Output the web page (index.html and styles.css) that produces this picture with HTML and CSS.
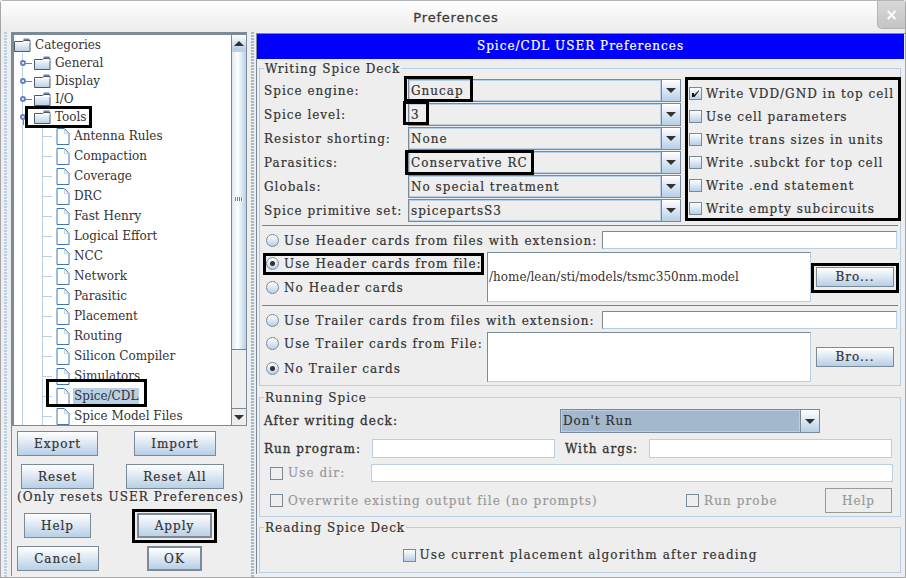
FILE: index.html
```html
<!DOCTYPE html>
<html lang="en">
<head>
<meta charset="utf-8">
<title>Preferences</title>
<link rel="stylesheet" href="styles.css">
</head>
<body>
<svg class="defs" width="0" height="0">
  <defs>
    <linearGradient id="fg" x1="0" y1="0" x2="0" y2="1"><stop offset="0" stop-color="#fff"/><stop offset="1" stop-color="#b8cfe5"/></linearGradient>
    <symbol id="folder" viewBox="0 0 17 14">
      <path d="M9.5 0.5h6v2h-6z" fill="#6382bf"/>
      <path d="M0.5 3.5h8l1.5-1h6v11h-15.500z" fill="url(#fg)" stroke="#4a5a6a"/>
      <path d="M1 4.500h15" stroke="#fff"/>
    </symbol>
    <symbol id="file" viewBox="0 0 14 17">
      <path d="M1 0.500h7.500l4.500 5v11h-12z" fill="#fff" stroke="#3f78b0" stroke-width="1"/>
      <path d="M8.500 0.500v5h4.500" fill="none" stroke="#b8cfe5"/>
    </symbol>
    <symbol id="arrow" viewBox="0 0 10 5"><path d="M0 0h10l-5 5z" fill="#333"/></symbol>
    <symbol id="uparrow" viewBox="0 0 10 5"><path d="M0 5h10l-5-5z" fill="#333"/></symbol>
    <symbol id="check" viewBox="0 0 9 9"><path d="M1 4h2v2l5-5v1l-4.500 6h-2.500z" fill="#111"/></symbol>
  </defs>
</svg>
<div class="window">
  <header class="titlebar">
    <span class="title">Preferences</span>
    <span class="close">×</span>
  </header>
  <main class="main">
    <aside class="left">
      <div class="tree-frame">
        <div class="tree">
          <div class="vline"></div>
          <div class="vline2"></div>
          <div class="tn root"><svg class="ic-folder"><use href="#folder"/></svg><span>Categories</span></div>
          <div class="tn cat"><i class="knob"></i><svg class="ic-folder"><use href="#folder"/></svg><span>General</span></div>
          <div class="tn cat"><i class="knob"></i><svg class="ic-folder"><use href="#folder"/></svg><span>Display</span></div>
          <div class="tn cat"><i class="knob"></i><svg class="ic-folder"><use href="#folder"/></svg><span>I/O</span></div>
          <div class="tn cat"><i class="knob open"></i><svg class="ic-folder"><use href="#folder"/></svg><span>Tools</span></div>
          <div class="tn leaf"><i class="tick"></i><svg class="ic-file"><use href="#file"/></svg><span>Antenna Rules</span></div>
          <div class="tn leaf"><i class="tick"></i><svg class="ic-file"><use href="#file"/></svg><span>Compaction</span></div>
          <div class="tn leaf"><i class="tick"></i><svg class="ic-file"><use href="#file"/></svg><span>Coverage</span></div>
          <div class="tn leaf"><i class="tick"></i><svg class="ic-file"><use href="#file"/></svg><span>DRC</span></div>
          <div class="tn leaf"><i class="tick"></i><svg class="ic-file"><use href="#file"/></svg><span>Fast Henry</span></div>
          <div class="tn leaf"><i class="tick"></i><svg class="ic-file"><use href="#file"/></svg><span>Logical Effort</span></div>
          <div class="tn leaf"><i class="tick"></i><svg class="ic-file"><use href="#file"/></svg><span>NCC</span></div>
          <div class="tn leaf"><i class="tick"></i><svg class="ic-file"><use href="#file"/></svg><span>Network</span></div>
          <div class="tn leaf"><i class="tick"></i><svg class="ic-file"><use href="#file"/></svg><span>Parasitic</span></div>
          <div class="tn leaf"><i class="tick"></i><svg class="ic-file"><use href="#file"/></svg><span>Placement</span></div>
          <div class="tn leaf"><i class="tick"></i><svg class="ic-file"><use href="#file"/></svg><span>Routing</span></div>
          <div class="tn leaf"><i class="tick"></i><svg class="ic-file"><use href="#file"/></svg><span>Silicon Compiler</span></div>
          <div class="tn leaf"><i class="tick"></i><svg class="ic-file"><use href="#file"/></svg><span>Simulators</span></div>
          <div class="tn leaf"><i class="tick"></i><svg class="ic-file"><use href="#file"/></svg><span class="sel">Spice/CDL</span></div>
          <div class="tn leaf"><i class="tick"></i><svg class="ic-file"><use href="#file"/></svg><span>Spice Model Files</span></div>
        </div>
        <div class="scrollbar">
          <div class="sb-btn up"><svg class="sb-arrow"><use href="#uparrow"/></svg></div>
          <div class="sb-thumb"><i class="grip"></i></div>
          <div class="sb-track"></div>
          <div class="sb-btn down"><svg class="sb-arrow"><use href="#arrow"/></svg></div>
        </div>
      </div>
      <div class="btn-area">
        <div class="brow r1"><button class="btn b-export">Export</button><button class="btn b-import">Import</button></div>
        <div class="brow r2"><button class="btn b-reset">Reset</button><button class="btn b-resetall">Reset All</button></div>
        <div class="note">(Only resets USER Preferences)</div>
        <div class="brow r3"><button class="btn b-help">Help</button><button class="btn b-apply">Apply</button></div>
        <div class="brow r4"><button class="btn b-cancel">Cancel</button><button class="btn b-ok">OK</button></div>
      </div>
    </aside>
    <section class="right">
      <h1 class="banner">Spice/CDL USER Preferences</h1>
      <div class="body">
        <fieldset class="group g-write">
          <legend>Writing Spice Deck</legend>
          <div class="deck">
            <div class="combos">
              <div class="frow"><label>Spice engine:</label><div class="combo"><span>Gnucap</span><b><svg class="arr"><use href="#arrow"/></svg></b></div></div>
              <div class="frow"><label>Spice level:</label><div class="combo"><span>3</span><b><svg class="arr"><use href="#arrow"/></svg></b></div></div>
              <div class="frow"><label>Resistor shorting:</label><div class="combo"><span>None</span><b><svg class="arr"><use href="#arrow"/></svg></b></div></div>
              <div class="frow"><label>Parasitics:</label><div class="combo"><span>Conservative RC</span><b><svg class="arr"><use href="#arrow"/></svg></b></div></div>
              <div class="frow"><label>Globals:</label><div class="combo"><span>No special treatment</span><b><svg class="arr"><use href="#arrow"/></svg></b></div></div>
              <div class="frow"><label>Spice primitive set:</label><div class="combo"><span>spicepartsS3</span><b><svg class="arr"><use href="#arrow"/></svg></b></div></div>
            </div>
            <div class="checks">
              <div class="chk"><i class="box"><svg class="tick-mark"><use href="#check"/></svg></i><span>Write VDD/GND in top cell</span></div>
              <div class="chk"><i class="box"></i><span>Use cell parameters</span></div>
              <div class="chk"><i class="box"></i><span>Write trans sizes in units</span></div>
              <div class="chk"><i class="box"></i><span>Write .subckt for top cell</span></div>
              <div class="chk"><i class="box"></i><span>Write .end statement</span></div>
              <div class="chk"><i class="box"></i><span>Write empty subcircuits</span></div>
            </div>
          </div>
          <div class="cards first">
            <div class="rad top"><i class="radio"></i><span class="lbl">Use Header cards from files with extension:</span><div class="tf ext"></div></div>
            <div class="radlow">
              <div class="radcol">
                <div class="rad"><i class="radio on"></i><span>Use Header cards from file:</span></div>
                <div class="rad"><i class="radio"></i><span>No Header cards</span></div>
              </div>
              <div class="area">/home/lean/sti/models/tsmc350nm.model</div>
              <button class="btn bro">Bro...</button>
            </div>
          </div>
          <div class="cards second">
            <div class="rad top"><i class="radio"></i><span class="lbl">Use Trailer cards from files with extension:</span><div class="tf ext"></div></div>
            <div class="radlow">
              <div class="radcol">
                <div class="rad"><i class="radio"></i><span>Use Trailer cards from File:</span></div>
                <div class="rad"><i class="radio on"></i><span>No Trailer cards</span></div>
              </div>
              <div class="area"></div>
              <button class="btn bro">Bro...</button>
            </div>
          </div>
        </fieldset>
        <fieldset class="group g-run">
          <legend>Running Spice</legend>
          <div class="run1"><label class="strong">After writing deck:</label><div class="combo hot"><span>Don't Run</span><b><svg class="arr"><use href="#arrow"/></svg></b></div></div>
          <div class="run2"><label class="strong">Run program:</label><div class="tf light prog"></div><label class="strong wa">With args:</label><div class="tf light args"></div></div>
          <div class="run3"><i class="box off"></i><span class="dis">Use dir:</span><div class="tf light dir"></div></div>
          <div class="run4"><i class="box off"></i><span class="dis over">Overwrite existing output file (no prompts)</span><i class="box off"></i><span class="dis probe">Run probe</span><button class="btn-dis">Help</button></div>
        </fieldset>
        <fieldset class="group g-read">
          <legend>Reading Spice Deck</legend>
          <div class="read1"><i class="box"></i><span>Use current placement algorithm after reading</span></div>
        </fieldset>
      </div>
    </section>
  </main>
  <div class="mark m-tools"></div>
  <div class="mark m-spice"></div>
  <div class="mark m-apply"></div>
  <div class="mark m-gnucap"></div>
  <div class="mark m-level"></div>
  <div class="mark m-para"></div>
  <div class="mark m-checks"></div>
  <div class="mark m-file"></div>
  <div class="mark m-bro"></div>
</div>
</body>
</html>
```

FILE: styles.css
```css
* { box-sizing: border-box; }
html, body { margin: 0; padding: 0; }
body { width: 906px; height: 578px; overflow: hidden; background: #eee; font: 12px/16px "DejaVu Serif", serif; color: #333; }
.defs { position: absolute; }
.window { position: relative; width: 906px; height: 578px; display: flex; flex-direction: column; border: 1px solid #a5a5a5; border-top-color: #b5b5b5; border-radius: 4px 4px 0 0; background: #eee; }
.titlebar { height: 31px; flex: none; position: relative; display: flex; align-items: center; justify-content: center; background: linear-gradient(#fff, #ebebeb); padding: 1px 0 0 6px; }
.title { font: 13px "DejaVu Sans", sans-serif; letter-spacing: 0.8px; -webkit-text-stroke: 0.3px #3c3c3c; color: #3c3c3c; }
.close { position: absolute; right: 0; top: 0; width: 28px; height: 28px; display: flex; align-items: center; justify-content: center; background: linear-gradient(#d8d8d8, #c4c4c4); border: 1px solid #b4b4b4; border-top: 0; border-right: 0; border-radius: 0 0 0 5px; color: #fff; font: bold 15px "DejaVu Sans", sans-serif; }
.main { flex: 1; display: flex; min-height: 0; }

/* left column */
.left { width: 255px; flex: none; padding: 0 0 0 10px; position: relative; background: #eee; }
.left::before { content: ""; position: absolute; left: 3px; top: 0; bottom: 0; width: 3px; background: radial-gradient(circle at 1px 1px, #b8cfe5 0.7px, transparent 1px) 0 0 / 2px 3px; }
.left::after { content: ""; position: absolute; right: 2px; top: 0; bottom: 0; width: 3px; background: radial-gradient(circle at 1px 1px, #a3b8cc 0.7px, transparent 1px) 0 0 / 2px 3px; }
.tree-frame { width: 236px; height: 394px; display: flex; border-top: 3px solid #7a8a99; border-left: 3px solid #7a8a99; border-bottom: 1px solid #7a8a99; }
.tree { position: relative; width: 217px; flex: none; background: #fff; overflow: hidden; padding-top: 1px; }
.vline { position: absolute; left: 8px; top: 18px; bottom: 0; width: 1px; background: #b8cfe5; }
.vline2 { position: absolute; left: 28px; top: 92px; bottom: 0; width: 1px; background: #b8cfe5; }
.tn { position: relative; display: flex; align-items: center; white-space: nowrap; }
.tn.root { height: 18px; }
.tn.cat { height: 18px; padding-left: 20px; }
.tn.leaf { height: 20px; padding-left: 42px; }
.tn span { padding: 0 1px; margin-left: 3px; color: #333; line-height: 16px; }
.sel { background: #b8cfe5; }
.ic-folder { width: 17px; height: 14px; flex: none; }
.ic-file { width: 14px; height: 17px; flex: none; }
.knob { position: absolute; left: 6px; top: 6px; width: 6px; height: 6px; border: 2px solid #6382bf; border-radius: 50%; background: #fff; }
.knob::after { content: ""; position: absolute; left: 4px; top: 1px; width: 6px; height: 1px; background: #6382bf; }
.knob.open::after { left: 1px; top: 4px; width: 1px; height: 5px; }
.tick { position: absolute; left: 28px; top: 10px; width: 10px; height: 1px; background: #b8cfe5; }
.scrollbar { width: 16px; flex: none; display: flex; flex-direction: column; background: #eee; border-left: 1px solid #7a8a99; border-right: 1px solid #7a8a99; }
.sb-btn { height: 17px; flex: none; display: flex; align-items: center; justify-content: center; background: linear-gradient(#fff, #b8cfe5 90%); border-bottom: 1px solid #b8cfe5; }
.sb-btn.down { background: #eee; border-top: 1px solid #7a8a99; border-bottom: 0; }
.sb-arrow { width: 10px; height: 5px; }
.sb-thumb { height: 298px; flex: none; position: relative; background: linear-gradient(90deg, #dde8f3, #fff 40%, #b8cfe5); border-bottom: 1px solid #6382bf; }
.grip { position: absolute; left: 3px; top: 145px; width: 8px; height: 4px; background: repeating-linear-gradient(90deg, #6382bf 0 1px, #fff 1px 2px); }
.sb-track { flex: 1; }
.btn-area { width: 236px; padding-top: 5px; display: flex; flex-direction: column; border-left: 1px solid #7a8a99; height: 150px; }
.brow { display: flex; }
.btn { font: 12px/16px "DejaVu Serif", serif; color: #333; -webkit-text-stroke: 0.2px #333; height: 25px; padding: 0; background: linear-gradient(#fff, #b8cfe5); border: 1px solid #7a8a99; border-radius: 0; letter-spacing: 1px; }
.r1 { height: 33px; padding-left: 5px; }
.b-export { width: 81px; }
.b-import { width: 82px; margin-left: 36px; }
.r2 { height: 25px; padding-left: 9px; }
.b-reset { width: 73px; }
.b-resetall { width: 98px; margin-left: 32px; }
.note { height: 24px; margin-left: 5px; line-height: 16px; white-space: nowrap; -webkit-text-stroke: 0.2px #333; letter-spacing: 1.07px; }
.r3 { height: 33px; padding-left: 12px; }
.b-help { width: 67px; }
.b-apply { width: 75px; margin-left: 46px; outline: 1px solid #7a8a99; outline-offset: -2px; }
.r4 { padding-left: 5px; }
.b-cancel { width: 82px; }
.b-ok { width: 55px; margin-left: 48px; border-width: 2px; }

/* right column */
.right { flex: 1; min-width: 0; display: flex; flex-direction: column; border-left: 1px solid #7a8a99; border-top: 1px solid #7a8a99; margin-top: 1px; height: 541px; }
.banner { margin: 0 1px 0 0; height: 25px; flex: none; background: #00f; color: #fff; font: 400 12px/25px "DejaVu Serif", serif; -webkit-text-stroke: 0.2px #fff; letter-spacing: 1px; text-align: center; }
.body { flex: 1; padding: 1px 4px 0 2px; }
.group { margin: 0; padding: 0; min-width: 0; border: 1px solid #b8cfe5; }
.group legend { height: 16px; padding: 1px 1px 0; margin-left: 4px; font-size: 12px; line-height: 16px; -webkit-text-stroke: 0.2px #333; letter-spacing: 1px; }
.g-write { height: 326px; }
.deck { display: flex; height: 149px; padding-top: 3px; }
.combos { width: 421px; display: flex; flex-direction: column; gap: 1px; }
.frow { display: flex; align-items: center; height: 23px; padding-left: 4px; }
.frow label { width: 144px; flex: none; white-space: nowrap; -webkit-text-stroke: 0.2px #333; letter-spacing: 1px; }
.combo { flex: 1; display: flex; height: 23px; border: 1px solid #7a8a99; background: #eee; }
.combo span { flex: 1; padding-left: 1px; border: 1px solid #b8cfe5; line-height: 20px; letter-spacing: 1px; -webkit-text-stroke: 0.2px #333; }
.combo b { width: 19px; flex: none; display: flex; align-items: center; justify-content: center; background: linear-gradient(#fff, #b8cfe5); border-left: 1px solid #7a8a99; }
.arr { width: 10px; height: 5px; }
.checks { flex: 1; padding: 3px 0 0 8px; display: flex; flex-direction: column; }
.chk { height: 23px; display: flex; align-items: center; white-space: nowrap; -webkit-text-stroke: 0.2px #333; letter-spacing: 1px; }
.box { width: 13px; height: 13px; flex: none; display: inline-flex; align-items: center; justify-content: center; border: 1px solid #7a8a99; background: linear-gradient(#fff, #b8cfe5); margin-right: 4px; }
.box.off { background: none; margin-right: 5px; }
.tick-mark { width: 9px; height: 9px; }
.cards { margin: 0 2px; border-top: 1px solid #6382bf; height: 80px; padding-top: 5px; }
.second { height: 81px; }
.rad { display: flex; align-items: center; height: 23px; white-space: nowrap; padding-left: 4px; -webkit-text-stroke: 0.2px #333; letter-spacing: 1.05px; }
.rad.top { height: 18px; }
.lbl { width: 318px; flex: none; padding-top: 1px; }
.first .rad span { padding-top: 1px; }
.radio { width: 13px; height: 13px; flex: none; border-radius: 50%; border: 1px solid #7a8a99; background: linear-gradient(#fff, #b8cfe5); margin-right: 5px; display: block; position: relative; }
.radio.on::after { content: ""; position: absolute; left: 3px; top: 3px; width: 5px; height: 5px; background: #333; border-radius: 50%; }
.tf { height: 18px; background: #fff; border: 1px solid #7a8a99; border-color: #7a8a99 #b8cfe5 #b8cfe5 #7a8a99; }
.ext { width: 295px; flex: none; }
.radlow { display: flex; margin-top: 3px; }
.radcol { width: 225px; flex: none; display: flex; flex-direction: column; gap: 1px; }
.second .radcol { gap: 2px; }
.area { width: 324px; height: 50px; flex: none; background: #fff; border: 1px solid #7a8a99; border-color: #7a8a99 #b8cfe5 #b8cfe5 #7a8a99; display: flex; align-items: center; padding-left: 1px; white-space: nowrap; }
.bro { width: 78px; height: 20px; margin: 15px 0 0 5px; line-height: 16px; }
.g-run { height: 128px; margin-top: 3px; }
.strong { white-space: nowrap; -webkit-text-stroke: 0.3px #333; letter-spacing: 1px; }
.run1 { display: flex; align-items: center; height: 24px; padding-left: 4px; margin-top: 4px; }
.run1 .strong { width: 296px; }
.combo.hot { flex: none; width: 260px; height: 24px; background: #a3b8cc; }
.combo.hot span { padding-left: 1px; line-height: 20px; }
.run2 { display: flex; align-items: center; height: 19px; padding-left: 4px; margin-top: 6px; }
.light { border: 1px solid #b8cfe5; }
.run2 .strong { width: 108px; }
.prog { width: 183px; height: 19px; }
.run2 .wa { width: 84px; margin-left: 10px; }
.args { width: 243px; height: 19px; }
.run3 { display: flex; align-items: center; height: 18px; padding-left: 10px; margin-top: 6px; }
.dis { color: #999; letter-spacing: 1.1px; white-space: nowrap; -webkit-text-stroke: 0.2px #999; }
.run3 .dis { width: 83px; }
.dir { width: 522px; }
.run4 { display: flex; align-items: center; height: 25px; padding-left: 10px; margin-top: 6px; }
.over { width: 398px; }
.probe { width: 121px; }
.btn-dis { width: 67px; height: 25px; padding: 0; background: none; border: 1px solid #999; color: #999; font: 12px/16px "DejaVu Serif", serif; letter-spacing: 1px; -webkit-text-stroke: 0.2px #999; }
.g-read { height: 54px; margin-top: 2px; }
.read1 { display: flex; align-items: center; justify-content: center; margin-top: 12px; white-space: nowrap; -webkit-text-stroke: 0.2px #333; letter-spacing: 1.13px; }

/* black annotation frames drawn over the screenshot */
.mark { position: absolute; border: 3px solid #000; pointer-events: none; }
.m-tools { left: 24px; top: 105px; width: 67px; height: 22px; }
.m-spice { left: 45px; top: 378px; width: 101px; height: 28px; }
.m-apply { left: 131px; top: 508px; width: 85px; height: 34px; }
.m-gnucap { left: 403px; top: 75px; width: 69px; height: 26px; }
.m-level { left: 402px; top: 100px; width: 26px; height: 24px; }
.m-para { left: 404px; top: 149px; width: 129px; height: 25px; }
.m-checks { left: 684px; top: 76px; width: 216px; height: 144px; }
.m-file { left: 262px; top: 252px; width: 221px; height: 22px; }
.m-bro { left: 810px; top: 262px; width: 88px; height: 30px; }
```
